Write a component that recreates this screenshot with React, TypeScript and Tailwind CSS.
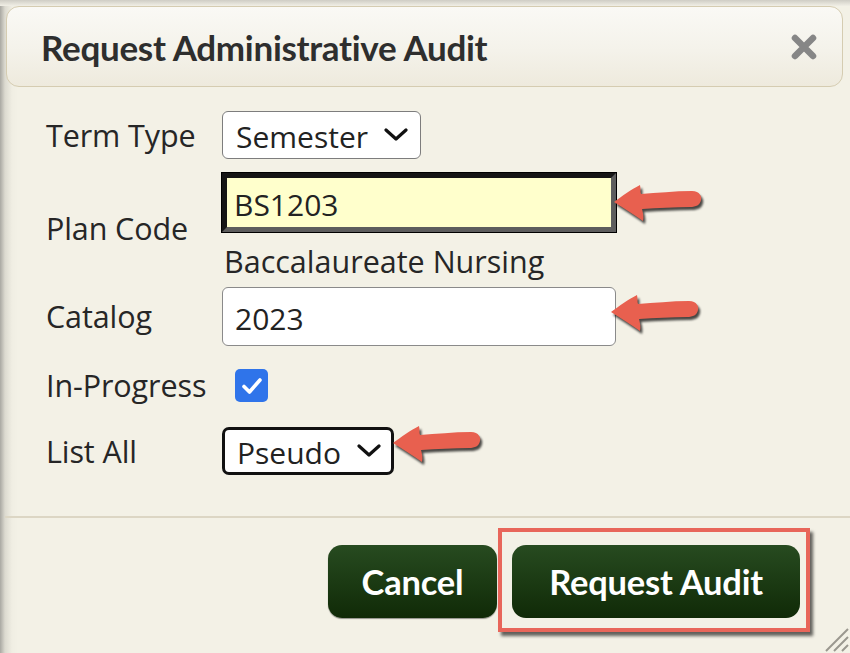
import React from "react"

const labelFont = { fontFamily: '"Open Sans", "Noto Sans", sans-serif' }
const boldFont = { fontFamily: 'Lato, "Noto Sans", sans-serif' }

function Chevron() {
  return (
    <svg width="24" height="14" viewBox="0 0 24 14" className="shrink-0">
      <path d="M2 2 L12 11 L22 2" fill="none" stroke="#111" strokeWidth="3.2" strokeLinecap="round" strokeLinejoin="round" />
    </svg>
  )
}

function Arrow({ className }: { className: string }) {
  return (
    <svg
      width="90"
      height="40"
      viewBox="0 0 90 40"
      className={"absolute drop-shadow-[2px_3px_1px_rgba(0,0,0,0.7)] " + className}
    >
      <path
        d="M2 19 C10 13 20 6 28 2 C29 6 28 9 29 11 C45 10 62 8 80 8 C88 8 90 14 89 17 C88 22 84 24 78 24 C62 24 45 25 30 26 C31 30 32 34 31 38 C22 32 12 25 2 19 Z"
        fill="#e8604f"
      />
    </svg>
  )
}

function Row({ label, children, className = "" }: { label: string; children: React.ReactNode; className?: string }) {
  return (
    <div className={"flex items-center " + className}>
      <div className="w-[176px] shrink-0 text-[30.5px] leading-none text-[#262626] tracking-[-0.1px]">{label}</div>
      <div>{children}</div>
    </div>
  )
}

export default function App() {
  return (
    <div
      className="relative w-[850px] h-[653px] overflow-hidden bg-[#f3f1e6] bg-[linear-gradient(to_right,#a9a8a2_0px,#dcdad0_5px,#f0eee3_12px,#f3f1e6_18px)]"
      style={labelFont}
    >
      <div className="h-[6px] bg-[linear-gradient(to_bottom,#cfcdc5,#f1efe6)]" />
      {/* title bar */}
      <div className="ml-[6px] mr-[7px] h-[81px] rounded-[13px] border border-[#d5ccb1] bg-[linear-gradient(to_bottom,#faf9f5_0%,#f4f2ea_55%,#eeeadd_100%)] flex items-center justify-between pl-[34px] pr-[24px]">
        <div className="text-[35px] font-bold text-[#2e2e2e] tracking-[-0.3px] pt-[2px]" style={boldFont}>
          Request Administrative Audit
        </div>
        <svg width="28" height="28" viewBox="0 0 28 28">
          <path d="M5 5 L23 23 M23 5 L5 23" stroke="#868686" strokeWidth="6.5" strokeLinecap="round" />
        </svg>
      </div>

      {/* form */}
      <div className="pl-[46px] pt-[24px] flex flex-col">
        <Row label="Term Type">
          <div className="w-[199px] h-[48px] rounded-[6px] border border-[#7d7d7d] bg-white flex items-center justify-between pl-[13px] pr-[12px] text-[30px] text-[#222]">
            <span className="pt-[3px]">Semester</span>
            <Chevron />
          </div>
        </Row>

        <Row label="Plan Code" className="mt-[14px]">
          <div className="flex flex-col">
            <div className="w-[394px] h-[59px] bg-[#ffffcc] border-t-[5px] border-l-[5px] border-r-[5px] border-b-[5px] border-t-[#151515] border-l-[#151515] border-r-[#5d5d5d] border-b-[#5d5d5d] shadow-[0_0_0_1px_#000] flex items-center pl-[7px] text-[30px] text-[#222]">
              <span className="pt-[3px]">BS1203</span>
            </div>
            <div className="mt-[6px] h-[46px] pl-[2px] text-[30.5px] leading-[46px] text-[#262626]">Baccalaureate Nursing</div>
          </div>
        </Row>

        <Row label="Catalog" className="mt-[3px]">
          <div className="w-[394px] h-[59px] rounded-[6px] border border-[#8a8a8a] bg-white flex items-center pl-[12px] text-[30px] text-[#222]">
            <span className="pt-[3px]">2023</span>
          </div>
        </Row>

        <Row label="In-Progress" className="mt-[23px]">
          <div className="ml-[13px] w-[33px] h-[33px] rounded-[5px] bg-[#2f74ea] flex items-center justify-center">
            <svg width="24" height="24" viewBox="0 0 24 24">
              <path d="M4 12.5 L9.5 18 L20 6" fill="none" stroke="#fff" strokeWidth="3.6" strokeLinecap="round" strokeLinejoin="round" />
            </svg>
          </div>
        </Row>

        <Row label="List All" className="mt-[25px]">
          <div className="w-[172px] h-[48px] rounded-[7px] border-[3px] border-[#111] bg-white flex items-center justify-between pl-[12px] pr-[10px] text-[30px] text-[#222]">
            <span className="pt-[3px]">Pseudo</span>
            <Chevron />
          </div>
        </Row>
      </div>

      {/* divider */}
      <div className="mt-[41px] ml-[5px] h-[2px] bg-[#dcd6c4]" />

      {/* footer */}
      <div className="flex justify-end items-start pr-[40px] pt-[10px]" style={boldFont}>
        <button className="mt-[17px] w-[169px] h-[73px] rounded-[14px] bg-[linear-gradient(to_bottom,#274b20,#102a07)] text-white text-[34.5px] font-bold tracking-[-0.2px] shadow-[0_1px_1px_rgba(0,0,0,0.4)]">
          Cancel
        </button>
        <div className="ml-[1px] border-[4px] border-[#e8665a] pl-[10px] pt-[13px] pr-[6px] pb-[10px] shadow-[3px_4px_3px_rgba(0,0,0,0.6)]">
          <button className="w-[288px] h-[73px] rounded-[14px] bg-[linear-gradient(to_bottom,#274b20,#102a07)] text-white text-[34.5px] font-bold tracking-[-0.2px]">
            Request Audit
          </button>
        </div>
      </div>

      {/* resize grip */}
      <svg width="34" height="34" viewBox="0 0 34 34" className="absolute right-0 bottom-0">
        <path d="M32 10 L10 32 M32 18 L18 32 M32 26 L26 32" stroke="#9a988f" strokeWidth="2" />
      </svg>

      {/* annotation arrows */}
      <Arrow className="left-[612px] top-[183px]" />
      <Arrow className="left-[609px] top-[293px]" />
      <Arrow className="left-[391px] top-[424px]" />
    </div>
  )
}
